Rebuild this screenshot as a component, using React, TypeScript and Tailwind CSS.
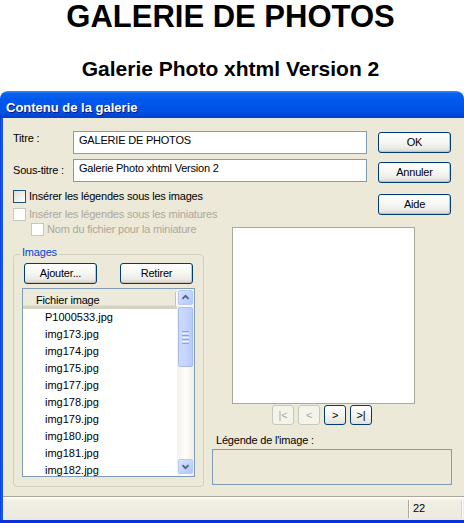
import React from "react";

const btnBase =
  "flex items-center justify-center h-[21px] w-[73px] rounded-[3px] border border-[#003C74] bg-[linear-gradient(180deg,#FFFFFF_0%,#F7F7F4_45%,#ECEBE6_80%,#D8D3C8_100%)] text-[11px] leading-[13px] font-normal text-black shadow-[inset_-1px_-1px_0_#C9C5B8]";

function XPButton({ children, className = "" }: { children: React.ReactNode; className?: string }) {
  return <div className={`${btnBase} ${className}`}>{children}</div>;
}

function NavButton({ children, disabled }: { children: React.ReactNode; disabled?: boolean }) {
  return disabled ? (
    <div className="flex items-center justify-center w-[22px] h-[20px] rounded-[3px] border border-[#C9C7BA] bg-[#F5F4EA] text-[11px] leading-[13px] text-[#ACA899]">
      {children}
    </div>
  ) : (
    <div className="flex items-center justify-center w-[22px] h-[20px] rounded-[3px] border border-[#003C74] bg-[linear-gradient(180deg,#FFFFFF_0%,#F5F5F1_50%,#E3E1D7_100%)] text-[11px] leading-[13px] text-black">
      {children}
    </div>
  );
}

function Checkbox({ disabled }: { disabled?: boolean }) {
  return disabled ? (
    <div className="w-[13px] h-[13px] shrink-0 border border-[#CAC8BB] bg-white" />
  ) : (
    <div className="w-[13px] h-[13px] shrink-0 border border-[#1C5180] bg-[linear-gradient(135deg,#DCDBD5_0%,#F2F2EE_60%,#FFFFFF_100%)]" />
  );
}

function ArrowIcon({ down }: { down?: boolean }) {
  return (
    <svg width="15" height="15" viewBox="0 0 15 15">
      <polyline
        points={down ? "4,6 7.5,9.5 11,6" : "4,9 7.5,5.5 11,9"}
        fill="none"
        stroke="#4D6185"
        strokeWidth="2"
      />
    </svg>
  );
}

const files = [
  "P1000533.jpg",
  "img173.jpg",
  "img174.jpg",
  "img175.jpg",
  "img177.jpg",
  "img178.jpg",
  "img179.jpg",
  "img180.jpg",
  "img181.jpg",
  "img182.jpg",
];

export default function App() {
  return (
    <div className="w-[464px] h-[523px] bg-white overflow-hidden font-['Liberation_Sans',Arial,sans-serif] text-black">
      {/* Page header */}
      <div className="h-[91px] w-[461px] flex flex-col items-center pt-[1px]">
        <div className="text-[31px] leading-[31px] font-bold">GALERIE DE PHOTOS</div>
        <div className="text-[21px] leading-[21px] font-bold mt-[26px]">Galerie Photo xhtml Version 2</div>
      </div>

      {/* Window */}
      <div className="flex flex-col h-[432px]">
        {/* Title bar */}
        <div className="h-[27px] rounded-t-[8px] bg-[linear-gradient(180deg,#3B8CF8_0%,#0A62EE_10%,#0058EC_35%,#0054E8_65%,#004EDF_85%,#0043CF_100%)] pl-[6px] pt-[9px] border-b border-[#0A3FC0]">
          <div className="text-[13px] leading-[15px] font-bold text-white [text-shadow:1px_1px_0_#0A1883]">
            Contenu de la galerie
          </div>
        </div>

        <div className="flex flex-1">
          {/* Left frame border */}
          <div className="w-[3px] bg-[linear-gradient(90deg,#0831D9_0%,#166AEE_60%,#0A4AD8_100%)]" />

          <div className="flex-1 flex flex-col bg-[#ECE9D8]">
            {/* Content */}
            <div className="h-[378px] flex flex-col pt-[13px] pl-[10px] text-[11px] leading-[13px] tracking-[-0.2px]">
              {/* Row 1 */}
              <div className="flex items-start">
                <div className="w-[60px] mt-[1px]">Titre :</div>
                <div className="w-[294px] h-[23px] border border-[#7F9DB9] bg-white pl-[5px] pt-[2px]">
                  GALERIE DE PHOTOS
                </div>
                <XPButton className="ml-[11px] mt-[1px]">OK</XPButton>
              </div>
              {/* Row 2 */}
              <div className="flex items-start mt-[5px]">
                <div className="w-[60px] mt-[5px]">Sous-titre :</div>
                <div className="w-[294px] h-[23px] border border-[#7F9DB9] bg-white pl-[5px] pt-[2px]">
                  Galerie Photo xhtml Version 2
                </div>
                <XPButton className="ml-[11px] mt-[3px]">Annuler</XPButton>
              </div>

              {/* Part B */}
              <div className="flex mt-[7px]">
                {/* Left column */}
                <div className="w-[199px] flex flex-col">
                  <div className="flex items-start whitespace-nowrap">
                    <Checkbox />
                    <span className="ml-[3px]">Insérer les légendes sous les images</span>
                  </div>
                  <div className="flex items-start mt-[5px] whitespace-nowrap text-[#ACA899]">
                    <Checkbox disabled />
                    <span className="ml-[3px]">Insérer les légendes sous les miniatures</span>
                  </div>
                  <div className="flex items-start mt-[2px] ml-[18px] whitespace-nowrap text-[#ACA899]">
                    <Checkbox disabled />
                    <span className="ml-[3px]">Nom du fichier pour la miniature</span>
                  </div>

                  <fieldset className="mt-[10px] w-[191px] border border-[#D0D0BF] rounded-[4px] pl-[6px] pt-[1px] pb-[9px] m-0">
                    <legend className="px-[2px] pb-[3px] leading-[13px] text-[#0046D5]">Images</legend>
                    <div className="flex">
                      <XPButton className="ml-[4px]">Ajouter...</XPButton>
                      <XPButton className="ml-[23px]">Retirer</XPButton>
                    </div>
                    <div className="mt-[4px] ml-[2px] w-[173px] h-[189px] border border-[#7F9DB9] bg-white flex overflow-hidden">
                      <div className="w-[154px] flex flex-col overflow-hidden">
                        {/* Header */}
                        <div className="h-[20px] shrink-0 flex bg-[#EBEADB] border-b-[3px] border-[#D6D2C2] shadow-[inset_0_-1px_0_#E2DECD]">
                          <div className="w-[152px] pl-[13px] pt-[5px] leading-[13px]">Fichier image</div>
                          <div className="w-[2px] h-[14px] mt-[3px] border-l border-[#C7C5B2] bg-white" />
                        </div>
                        {files.map((f) => (
                          <div key={f} className="h-[17px] shrink-0 leading-[17px] pl-[22px] whitespace-nowrap tracking-normal">
                            {f}
                          </div>
                        ))}
                      </div>
                      {/* Scrollbar */}
                      <div className="w-[17px] flex flex-col items-center bg-[linear-gradient(90deg,#F3F1EC_0%,#FEFEFB_50%,#F0EEE6_100%)] pt-[1px] pb-[1px]">
                        <div className="w-[15px] h-[15px] rounded-[2px] border border-[#B7CAF5] bg-[linear-gradient(135deg,#D8E4FD_0%,#C1D3FB_60%,#B2C7F9_100%)] flex items-center justify-center">
                          <ArrowIcon />
                        </div>
                        <div className="w-[15px] h-[60px] mt-[2px] rounded-[2px] border border-[#A9BCEC] bg-[linear-gradient(90deg,#CADAFD_0%,#C6D6FC_50%,#B7CBF9_100%)] flex flex-col items-center justify-center gap-[1px]">
                          <div className="w-[7px] h-[1px] bg-[#8DA6E8]" />
                          <div className="w-[7px] h-[1px] bg-[#EEF3FE]" />
                          <div className="w-[7px] h-[1px] bg-[#8DA6E8]" />
                          <div className="w-[7px] h-[1px] bg-[#EEF3FE]" />
                          <div className="w-[7px] h-[1px] bg-[#8DA6E8]" />
                          <div className="w-[7px] h-[1px] bg-[#EEF3FE]" />
                          <div className="w-[7px] h-[1px] bg-[#8DA6E8]" />
                        </div>
                        <div className="flex-1" />
                        <div className="w-[15px] h-[15px] mb-[1px] rounded-[2px] border border-[#B7CAF5] bg-[linear-gradient(135deg,#D8E4FD_0%,#C1D3FB_60%,#B2C7F9_100%)] flex items-center justify-center">
                          <ArrowIcon down />
                        </div>
                      </div>
                    </div>
                  </fieldset>
                </div>

                {/* Right column */}
                <div className="flex flex-col">
                  <XPButton className="ml-[166px] mt-[4px]">Aide</XPButton>
                  <div className="mt-[12px] ml-[20px] w-[183px] h-[177px] border border-[#ACA899] bg-white" />
                  <div className="mt-[1px] ml-[60px] flex gap-[4px]">
                    <NavButton disabled>|&lt;</NavButton>
                    <NavButton disabled>&lt;</NavButton>
                    <NavButton>&gt;</NavButton>
                    <NavButton>&gt;|</NavButton>
                  </div>
                  <div className="mt-[9px] ml-[4px] whitespace-nowrap">Légende de l'image :</div>
                  <div className="mt-[2px] w-[240px] h-[36px] border border-[#7F9DB9] bg-[#ECE9D8]" />
                </div>
              </div>
            </div>

            {/* Status bar */}
            <div className="h-[24px] flex border-t border-[#ACA899] bg-[linear-gradient(180deg,#FFFFFF_0%,#F1EFE4_15%,#ECEAE0_100%)] text-[11px] leading-[13px]">
              <div className="w-[405px]" />
              <div className="w-[2px] mt-[3px] mb-[2px] border-l border-[#ACA899] bg-white" />
              <div className="w-[51px] flex items-center pl-[3px]">22</div>
              <div className="w-[2px] mt-[3px] mb-[2px] border-l border-[#D6D3C6] bg-white" />
            </div>
          </div>
        </div>

        {/* Bottom frame border */}
        <div className="h-[3px] bg-[#0831D9]" />
      </div>
    </div>
  );
}
